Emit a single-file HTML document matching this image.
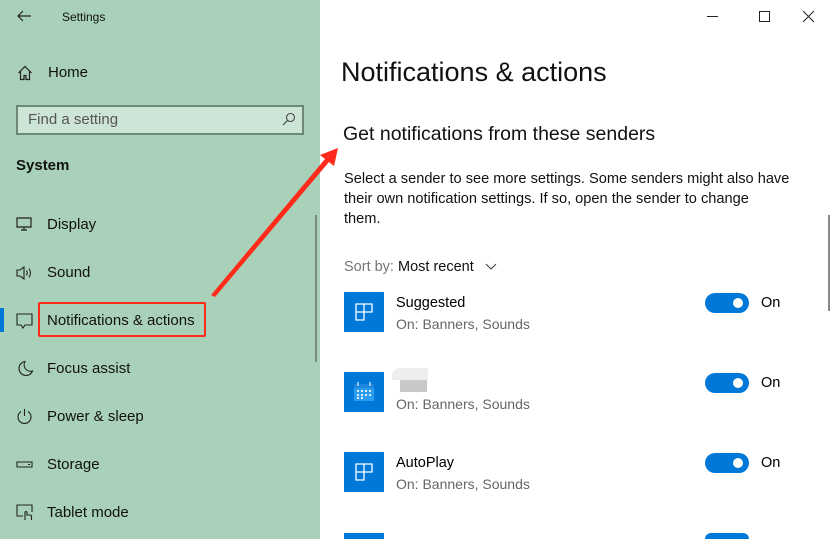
<!DOCTYPE html>
<html><head><meta charset="utf-8"><style>
*{margin:0;padding:0;box-sizing:border-box}
html,body{width:832px;height:539px;overflow:hidden}
body{font-family:"Liberation Sans","Noto Sans CJK SC",sans-serif;background:#fff;color:#000}
#w{position:relative;width:832px;height:539px;overflow:hidden}
.sb{position:absolute;left:0;top:0;width:320px;height:539px;background:#a9d0b9}
.a{position:absolute;white-space:nowrap}
.nav{font-size:15px;color:#111}
.ic{position:absolute}
.tile{position:absolute;left:344px;width:40px;height:40px;background:#0078d7}
.tg{position:absolute;left:705px;width:44px;height:20px;border-radius:10px;background:#0078d7}
.tg:after{content:"";position:absolute;right:6px;top:5px;width:10px;height:10px;border-radius:50%;background:#fff}
.on{position:absolute;left:761px;font-size:14.5px}
.t1{position:absolute;left:396px;font-size:14.5px}
.t2{position:absolute;left:396px;font-size:14px;color:#666}
</style></head><body><div id="w">
<div class="sb"></div>
<svg class="ic" style="left:16px;top:9px" width="16" height="14"><path d="M15 7H2M7 2L2 7l5 5" fill="none" stroke="#222" stroke-width="1.2"/></svg>
<div class="a" style="left:62px;top:10px;font-size:12px;color:#111">Settings</div>
<svg class="ic" style="left:17px;top:65px" width="16" height="16"><path d="M1.5 8L8 1.5 14.5 8M3.5 6v8.5h3.5v-4h2v4h3.5V6" fill="none" stroke="#222" stroke-width="1.2"/></svg>
<div class="a nav" style="left:48px;top:64px">Home</div>
<div class="a" style="left:16px;top:105px;width:288px;height:30px;background:#cde5d6;border:2px solid #6e8a77"></div>
<div class="a" style="left:28px;top:111px;font-size:15px;color:#555">Find a setting</div>
<svg class="ic" style="left:282px;top:112px" width="14" height="14"><circle cx="8.5" cy="5.5" r="4" fill="none" stroke="#444" stroke-width="1.1"/><path d="M5.5 8.5L1 13" stroke="#444" stroke-width="1.2"/></svg>
<div class="a" style="left:16px;top:157px;font-size:15px;font-weight:bold;color:#111">System</div>
<svg class="ic" style="left:16px;top:217px" width="16" height="14"><path d="M1 1h14v9H1zM8 10v3M5 13h6" fill="none" stroke="#222" stroke-width="1.2"/></svg>
<div class="a nav" style="left:47px;top:216px">Display</div>
<svg class="ic" style="left:16px;top:265px" width="18" height="16"><path d="M1 5h3l4-3v12l-4-3H1z" fill="none" stroke="#222" stroke-width="1.1"/><path d="M10.5 5.5q1.5 2.5 0 5M13 3.5q3 4.5 0 9" fill="none" stroke="#222" stroke-width="1.1"/></svg>
<div class="a nav" style="left:47px;top:264px">Sound</div>
<div class="a" style="left:0;top:308px;width:4px;height:24px;background:#0078d7"></div>
<svg class="ic" style="left:16px;top:313px" width="17" height="17"><path d="M1 1h15v11H9l-2 3-2-3H1z" fill="none" stroke="#222" stroke-width="1.1"/></svg>
<div class="a" style="left:38px;top:302px;width:168px;height:35px;border:2.5px solid #ff2a1a;border-radius:2px"></div>
<div class="a nav" style="left:47px;top:312px">Notifications &amp; actions</div>
<svg class="ic" style="left:16px;top:360px" width="18" height="18"><path d="M9 1.5A7 7 0 1 0 16.5 11 6.5 6.5 0 0 1 9 1.5z" fill="none" stroke="#222" stroke-width="1.1"/></svg>
<div class="a nav" style="left:47px;top:360px">Focus assist</div>
<svg class="ic" style="left:16px;top:408px" width="17" height="17"><path d="M5 3.5a6.5 6.5 0 1 0 7 0M8.5 1v7" fill="none" stroke="#222" stroke-width="1.1"/></svg>
<div class="a nav" style="left:47px;top:408px">Power &amp; sleep</div>
<svg class="ic" style="left:16px;top:461px" width="17" height="8"><path d="M1 1h15v5H1z" fill="none" stroke="#222" stroke-width="1.1"/><path d="M12 3.5h2" stroke="#222"/></svg>
<div class="a nav" style="left:47px;top:456px">Storage</div>
<svg class="ic" style="left:16px;top:504px" width="18" height="18"><path d="M7 12H1V1h15v7" fill="none" stroke="#222" stroke-width="1.1"/><path d="M9 16V8.5a1 1 0 0 1 2 0V11h3a1.5 1.5 0 0 1 1.5 1.5V16" fill="none" stroke="#222" stroke-width="1.1"/></svg>
<div class="a nav" style="left:47px;top:504px">Tablet mode</div>
<div class="a" style="left:315px;top:215px;width:2px;height:147px;background:#7d8a82"></div>

<svg class="ic" style="left:705px;top:10px" width="110" height="14"><path d="M2 6.5h11" stroke="#222"/><rect x="54.5" y="1.5" width="10" height="10" fill="none" stroke="#222"/><path d="M98 1l11 11M109 1L98 12" stroke="#222"/></svg>
<div class="a" style="left:341px;top:57px;font-size:27px;color:#111">Notifications &amp; actions</div>
<div class="a" style="left:343px;top:123px;font-size:19.5px;color:#111">Get notifications from these senders</div>
<div class="a" style="left:344px;top:169px;font-size:14.6px;line-height:20px;color:#111">Select a sender to see more settings. Some senders might also have<br>their own notification settings. If so, open the sender to change<br>them.</div>
<div class="a" style="left:344px;top:259px;font-size:14.5px;color:#777">Sort by: <span style="color:#111">Most recent</span></div>
<svg class="ic" style="left:485px;top:263px" width="12" height="8"><path d="M1 1l5 5 5-5" fill="none" stroke="#444" stroke-width="1.1"/></svg>
<div class="a" style="left:828px;top:215px;width:2px;height:96px;background:#888"></div>

<div class="tile" style="top:292px"><svg width="40" height="40"><path d="M12 12h16v8H20v8h-8z M20 12v16M12 20h16" fill="none" stroke="#fff" stroke-width="1.3"/></svg></div>
<div class="t1" style="top:295px">Suggested</div><div class="t2" style="top:316px">On: Banners, Sounds</div>
<div class="tg" style="top:293px"></div><div class="on" style="top:295px">On</div>

<div class="tile" style="top:372px"><svg width="40" height="40"><rect x="10" y="12" width="20" height="17" fill="#2b9cf0"/><rect x="10" y="12" width="20" height="4" fill="#1c86dc"/><path d="M14 10v4M26 10v4" stroke="#bfe0ff" stroke-width="1.5"/><g fill="#dff0ff"><rect x="13" y="18" width="2" height="2"/><rect x="17" y="18" width="2" height="2"/><rect x="21" y="18" width="2" height="2"/><rect x="25" y="18" width="2" height="2"/><rect x="13" y="22" width="2" height="2"/><rect x="17" y="22" width="2" height="2"/><rect x="21" y="22" width="2" height="2"/><rect x="25" y="22" width="2" height="2"/><rect x="13" y="25" width="2" height="2"/><rect x="17" y="25" width="2" height="2"/></g></svg></div>
<div class="a" style="left:392px;top:368px;width:36px;height:12px;background:#eee;border-radius:8px 0 0 0"></div>
<div class="a" style="left:400px;top:380px;width:27px;height:12px;background:#c8c8c8"></div>
<div class="t2" style="top:396px">On: Banners, Sounds</div>
<div class="tg" style="top:373px"></div><div class="on" style="top:375px">On</div>

<div class="tile" style="top:452px"><svg width="40" height="40"><path d="M12 12h16v8H20v8h-8z M20 12v16M12 20h16" fill="none" stroke="#fff" stroke-width="1.3"/></svg></div>
<div class="t1" style="top:455px">AutoPlay</div><div class="t2" style="top:476px">On: Banners, Sounds</div>
<div class="tg" style="top:453px"></div><div class="on" style="top:455px">On</div>

<div class="a" style="left:344px;top:533px;width:40px;height:6px;background:#0078d7"></div>
<div class="a" style="left:705px;top:533px;width:44px;height:6px;background:#0078d7;border-radius:10px 10px 0 0"></div>

<svg class="ic" style="left:0;top:0" width="832" height="539"><polygon points="211,295 215,297 329,162 334,166 338,148 320,155 325,159" fill="#ff2a1a"/></svg>
</div></body></html>
